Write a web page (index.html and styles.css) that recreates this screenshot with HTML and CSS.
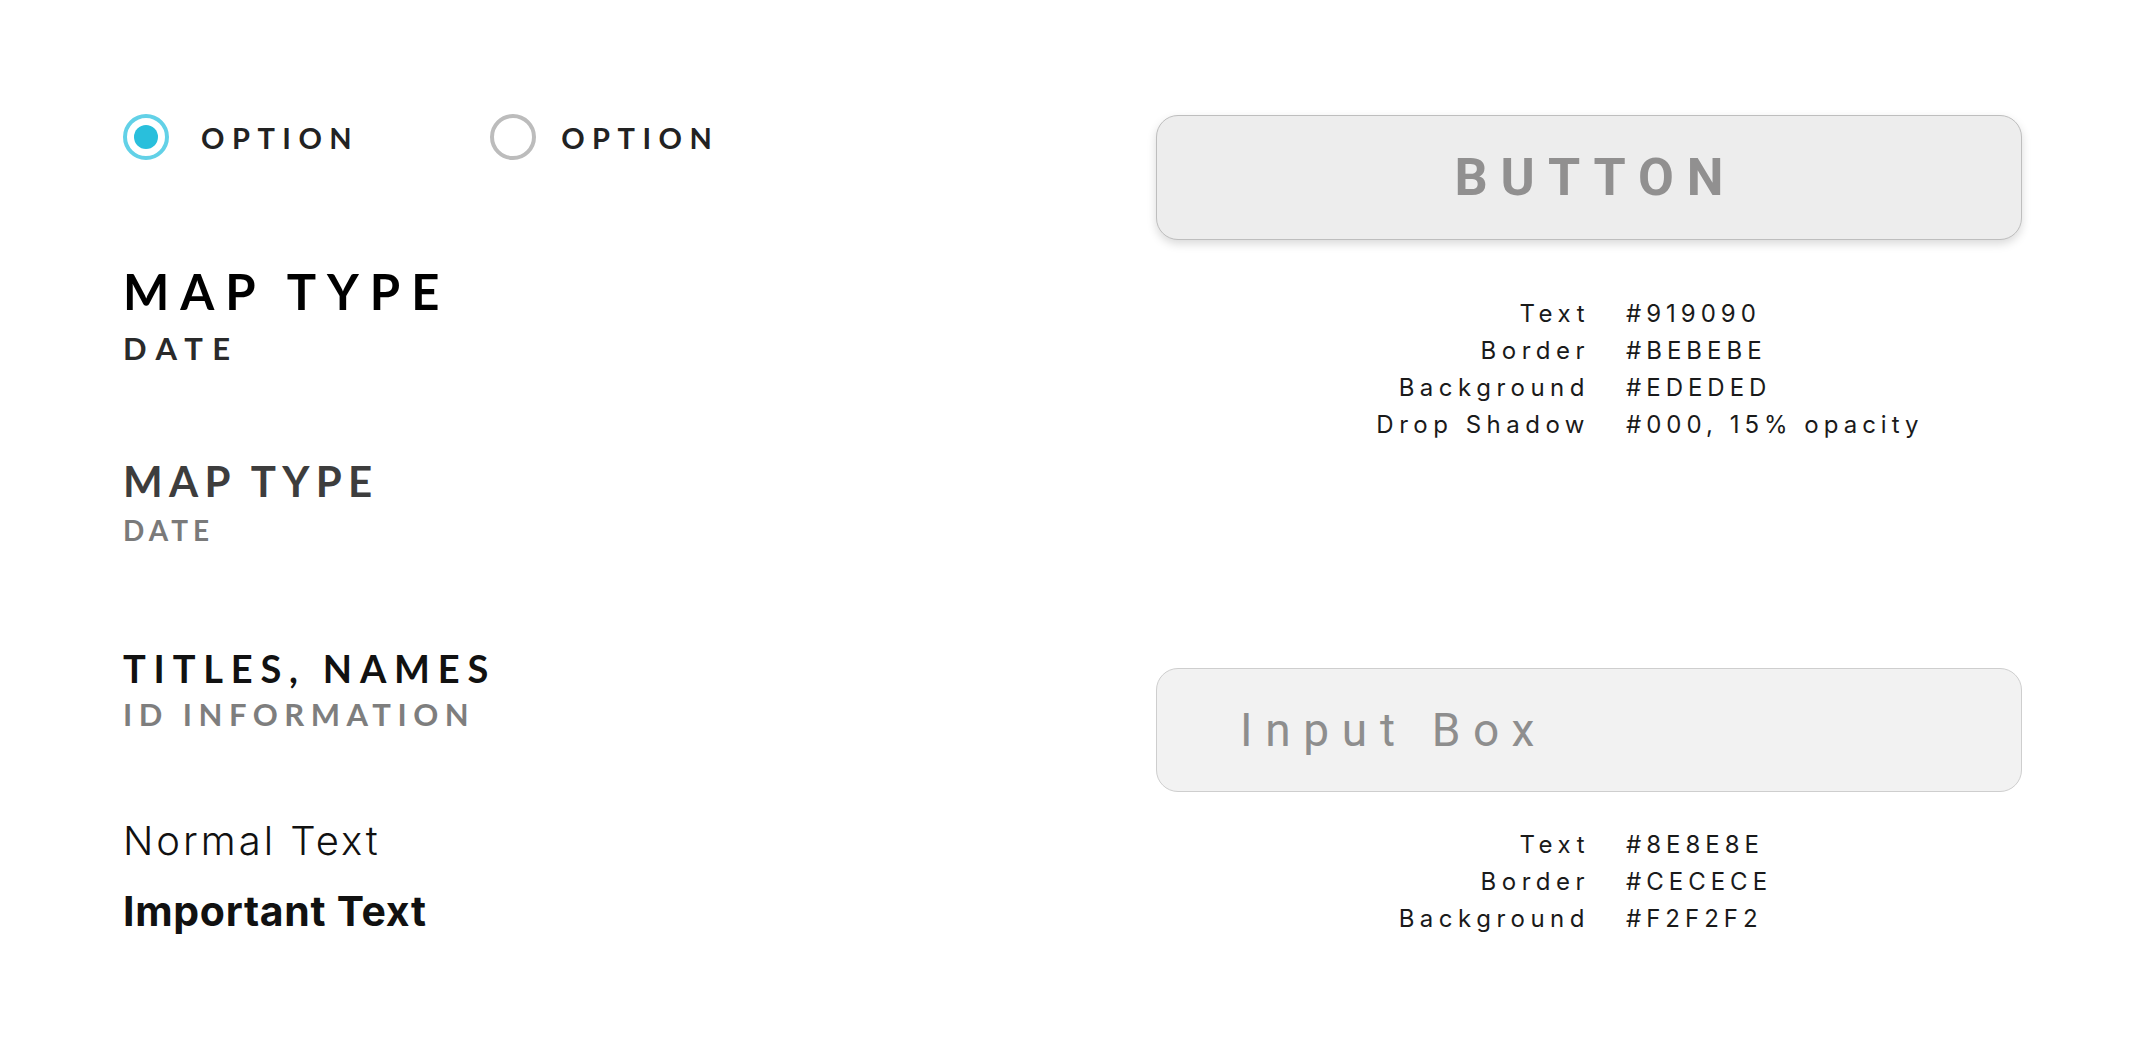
FILE: index.html
```html
<!DOCTYPE html>
<html lang="en">
<head>
  <meta charset="UTF-8" />
  <meta name="viewport" content="width=device-width, initial-scale=1.0"/>
  <title>UI Style Guide</title>
  <link rel="stylesheet" href="styles.css">
</head>
<body>

<main class="sheet">

  <section class="type-col">
    <div class="options">
      <label class="option">
        <span class="radio checked"></span>
        <span class="option-label">OPTION</span>
      </label>
      <label class="option">
        <span class="radio"></span>
        <span class="option-label">OPTION</span>
      </label>
    </div>

    <h1 class="title-lg">MAP TYPE</h1>
    <p class="sub-lg">DATE</p>

    <h2 class="title-md">MAP TYPE</h2>
    <p class="sub-md">DATE</p>

    <h3 class="title-sm">TITLES, NAMES</h3>
    <p class="sub-sm">ID INFORMATION</p>

    <p class="text-normal">Normal Text</p>
    <p class="text-important">Important Text</p>
  </section>

  <section class="control-col">
    <button class="btn">BUTTON</button>

    <dl class="specs specs-btn">
      <dt>Text</dt><dd>#919090</dd>
      <dt>Border</dt><dd>#BEBEBE</dd>
      <dt>Background</dt><dd>#EDEDED</dd>
      <dt>Drop Shadow</dt><dd>#000, 15% opacity</dd>
    </dl>

    <div class="input-box">Input Box</div>

    <dl class="specs specs-input">
      <dt>Text</dt><dd>#8E8E8E</dd>
      <dt>Border</dt><dd>#CECECE</dd>
      <dt>Background</dt><dd>#F2F2F2</dd>
    </dl>
  </section>

</main>

</body>
</html>
```

FILE: styles.css
```css
:root {
  --ink: #111;
  --accent: #29bfdc;
  --accent-ring: #62d1e7;
}
* {
  box-sizing: border-box;
}
body {
  margin: 0;
  background: #fff;
  color: var(--ink);
  font-family: Lato, "Liberation Sans", sans-serif;
}
.sheet {
  display: flex;
  padding: 114px 130px 0 123px;
  min-height: 1063px;
}
h1, h2, h3, p, dl, dd {
  margin: 0;
}

/* left column: type samples */
.type-col {
  flex: 1;
  display: flex;
  flex-direction: column;
  align-items: flex-start;
}
.options {
  display: flex;
  gap: 131px;
  height: 46px;
}
.option {
  display: flex;
  align-items: center;
  gap: 25px;
}
.radio {
  width: 46px;
  height: 46px;
  border-radius: 50%;
  border: 4px solid #bcbcbc;
  display: flex;
  align-items: center;
  justify-content: center;
}
.radio.checked {
  border-color: var(--accent-ring);
  margin-right: 7px;
}
.radio.checked::after {
  content: "";
  width: 24px;
  height: 24px;
  border-radius: 50%;
  background: var(--accent);
}
.option-label {
  font-size: 29px;
  line-height: 1;
  font-weight: 700;
  letter-spacing: 7.5px;
  color: #222;
}
.title-lg, .sub-lg, .title-md, .sub-md, .title-sm, .sub-sm {
  font-weight: 700;
  line-height: 1;
}
.title-lg {
  margin-top: 107px;
  font-size: 49px;
  letter-spacing: 11px;
  color: #000;
}
.sub-lg {
  margin-top: 17px;
  font-size: 31px;
  letter-spacing: 9.5px;
  color: #2a2a2a;
}
.title-md {
  margin-top: 96px;
  font-size: 42px;
  letter-spacing: 6.3px;
  color: #3d3d3d;
}
.sub-md {
  margin-top: 14px;
  font-size: 28px;
  letter-spacing: 5px;
  color: #7a7a7a;
}
.title-sm {
  margin-top: 105px;
  font-size: 38px;
  letter-spacing: 7.8px;
  color: #111;
}
.sub-sm {
  margin-top: 12px;
  font-size: 31px;
  letter-spacing: 6.5px;
  color: #7e7e7e;
}
.text-normal, .text-important {
  font-family: Inter, "Liberation Sans", sans-serif;
  line-height: 1;
  color: #111;
}
.text-normal {
  margin-top: 91px;
  font-size: 40px;
  font-weight: 300;
  letter-spacing: 3px;
}
.text-important {
  margin-top: 30px;
  font-size: 41px;
  font-weight: 700;
  letter-spacing: 0.7px;
}

/* right column: controls and their colour notes */
.control-col {
  width: 866px;
  display: flex;
  flex-direction: column;
}
.btn {
  margin-top: 1px;
  height: 125px;
  width: 100%;
  background: #ededed;
  border: 1px solid #bebebe;
  border-radius: 22px;
  box-shadow: 0 4px 10px rgba(0, 0, 0, 0.15);
  font-family: Roboto, "Liberation Sans", sans-serif;
  font-size: 52px;
  font-weight: 700;
  letter-spacing: 13px;
  padding: 0 0 0 13px;
  color: #919090;
}
.specs {
  display: grid;
  grid-template-columns: 434px 1fr;
  column-gap: 36px;
  font-family: Inter, "Liberation Sans", sans-serif;
  font-weight: 400;
  font-size: 24px;
  line-height: 37px;
  letter-spacing: 5.5px;
  color: #1a1a1a;
}
.specs dt {
  text-align: right;
}
.specs dd {
  letter-spacing: 5px;
}
.specs-btn {
  margin-top: 55px;
}
.input-box {
  margin-top: 225px;
  height: 124px;
  display: flex;
  align-items: center;
  padding-left: 83px;
  background: #f2f2f2;
  border: 1px solid #cecece;
  border-radius: 22px;
  font-family: Roboto, "Liberation Sans", sans-serif;
  font-size: 46px;
  font-weight: 400;
  letter-spacing: 12.7px;
  color: #8e8e8e;
}
.specs-input {
  margin-top: 34px;
}
```
